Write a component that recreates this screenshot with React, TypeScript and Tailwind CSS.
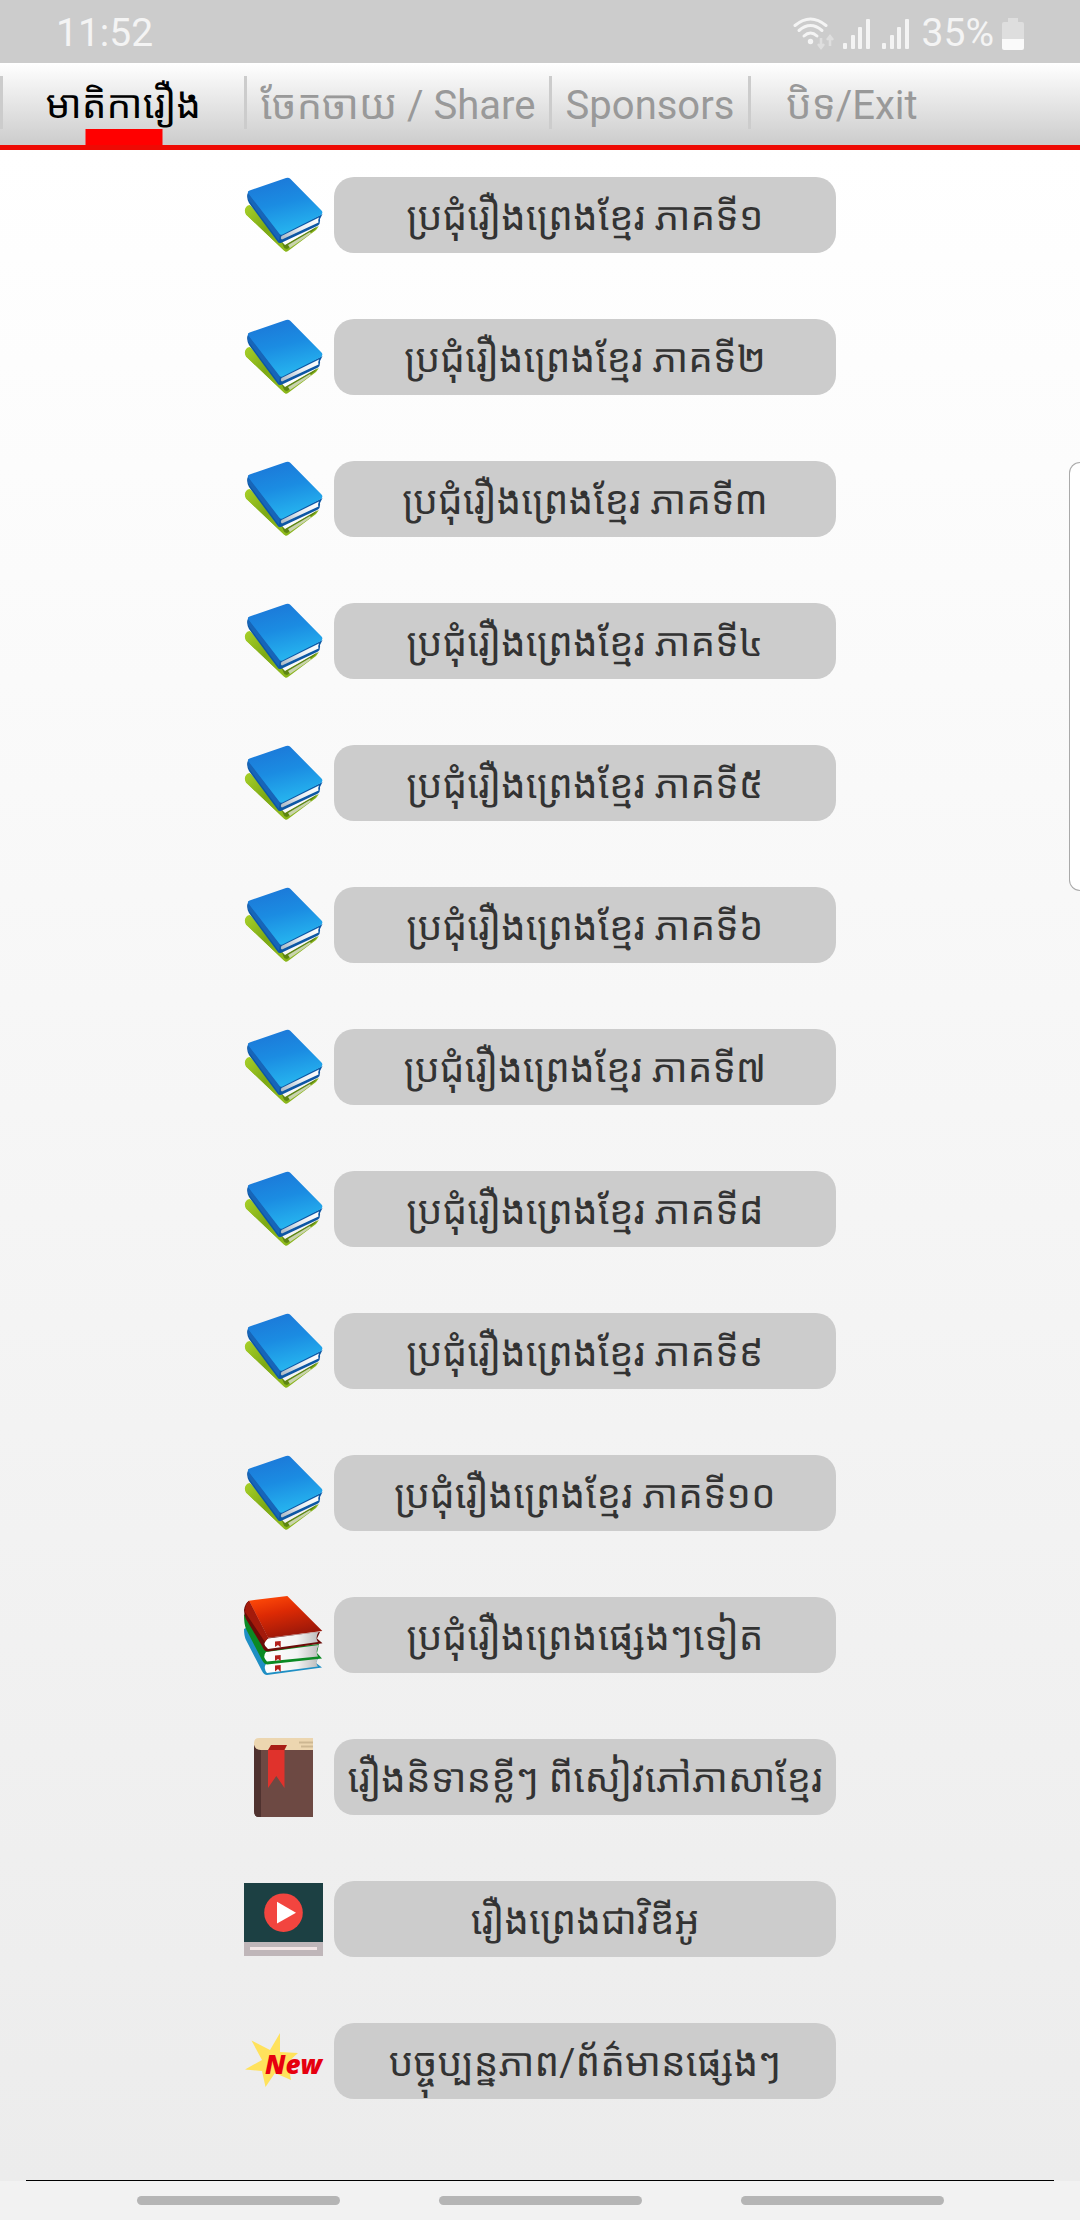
import type { ReactNode } from "react";

function BlueBooks() {
  return (
    <svg viewBox="0 0 80 78" className="h-[78px] w-20 overflow-visible" aria-hidden="true">
      <defs>
        <linearGradient id="blueCover" x1="0.3" y1="0" x2="0.6" y2="1">
          <stop offset="0" stopColor="#1c78d8" />
          <stop offset="0.45" stopColor="#1b8ce2" />
          <stop offset="1" stopColor="#27b8f0" />
        </linearGradient>
        <linearGradient id="greenSpine" x1="0" y1="0" x2="1" y2="1">
          <stop offset="0" stopColor="#a6cf28" />
          <stop offset="0.5" stopColor="#7da915" />
          <stop offset="1" stopColor="#93bd1f" />
        </linearGradient>
        <linearGradient id="pageEdge" x1="0" y1="1" x2="1" y2="0">
          <stop offset="0" stopColor="#a9b6c3" />
          <stop offset="0.5" stopColor="#e8edf2" />
          <stop offset="1" stopColor="#ffffff" />
        </linearGradient>
      </defs>
      <path d="M6 29L40 70L75 50L72 54L44 75Q42 76.500 40 74.500L2 38.500Q0 35 1.500 32Q3 29 6 29Z" fill="url(#greenSpine)" />
      <path d="M6 33L41 69L74 50L70 54L43 73L40 72L3 37Z" fill="#5d8512" />
      <path d="M44 69L66 56L67 57.500L46 72Z" fill="#c9d3ad" />
      <path d="M1.500 33Q3 29.500 7 30L38 67L42 76L40 74.500L2 38.500Z" fill="url(#greenSpine)" />
      <path d="M4.500 15L3.300 19Q2.800 23 5 27L33.500 65.500Q35 68 38 66.500L74 49.500Q76.500 48 76 43L78.500 38L40 56Z" fill="#0d57a4" />
      <path d="M37.500 60L75 41.500Q73.500 44.500 74.500 46.500L38 63.500Q36 62.500 37.500 60Z" fill="url(#pageEdge)" />
      <path d="M4 16Q4.500 14.700 7 14L42 2Q44.500 1 46.500 3L77.500 34.500Q79.500 37 77 39L38.500 58.500Q36 59.500 34.500 57.500L5 19Q3.500 17.500 4 16Z" fill="url(#blueCover)" />
      <path d="M4 17L36 58.500L35 65L4.500 24Q3 21 4 17Z" fill="#1765b8" />
    </svg>
  );
}

function StackedBooks() {
  return (
    <svg viewBox="0 0 80 78" className="h-[78px] w-20 overflow-visible" aria-hidden="true">
      <defs>
        <linearGradient id="redCover" x1="0.2" y1="0" x2="0.6" y2="1">
          <stop offset="0" stopColor="#ff4a08" />
          <stop offset="0.4" stopColor="#dd2a04" />
          <stop offset="1" stopColor="#96160a" />
        </linearGradient>
        <linearGradient id="redPages" x1="0" y1="0" x2="1" y2="0">
          <stop offset="0" stopColor="#ffffff" />
          <stop offset="0.6" stopColor="#f3f3f3" />
          <stop offset="1" stopColor="#bdbdbd" />
        </linearGradient>
      </defs>
      <path d="M0 33L2 32L22 66L75 60L72 67L78 71.500L23 79Q20 79 18 75L2 44Q0 40 0 33Z" fill="#1f8fc4" />
      <path d="M22 68Q19 72 23 77L74 70.500Q71 67 74 62Z" fill="url(#redPages)" />
      <path d="M0 19L3 16L22 54L75 48L73 57L78 62.500L23 68.500Q20 68 18 64L2 33Q0 28 0 19Z" fill="#0b8a24" />
      <path d="M22 56Q18 60.500 23 65.500L74 60.500Q71 55 75 49Z" fill="url(#redPages)" />
      <path d="M0 14Q1 7 5 4.700L24 41.700L76 36L73 42.500L78.500 47.300L24 55.500Q20 55.500 18 50L2 23Q0 19 0 14Z" fill="#6b0c08" />
      <path d="M24 42.500Q17 47.500 24 53L74 46Q71 42 74.500 36Z" fill="url(#redPages)" />
      <path d="M5 4.700L43.300 0L78.300 35L24 41.700Z" fill="url(#redCover)" />
      <path d="M5 4.700L24 41.700L21 46L1 16Q1 8 5 4.700Z" fill="#a31a0b" />
      <path d="M31 45.500L36.700 45V51.500L34 49L31 51Z M31 59.500L36.700 59V65L34 63L31 65Z M31 69.500L36.700 69V76L34 73L31 75.500Z" fill="#b3201c" />
    </svg>
  );
}

function BrownBook() {
  return (
    <svg viewBox="0 0 80 78" className="h-[78px] w-20 overflow-visible" aria-hidden="true">
      <path d="M15 0H69V13H10V5Q10 0 15 0Z" fill="#ecd6b0" />
      <path d="M10 7Q11 12 16 12H69V79H15Q10 79 10 73Z" fill="#6d4943" />
      <path d="M10 7Q11 12 17 12V79H15Q10 79 10 73Z" fill="#4f322f" />
      <path d="M55 3.500H69V5.500H55Z M57 7.500H69V9.500H57Z" fill="#cdb792" />
      <path d="M27 7H43L40.500 12H24Z" fill="#a81d16" />
      <path d="M24 12H40.500V50L32.300 38L24 50Z" fill="#e0322c" />
    </svg>
  );
}

function VideoBook() {
  return (
    <svg viewBox="0 0 80 78" className="h-[78px] w-20 overflow-visible" aria-hidden="true">
      <path d="M0 3H79V62H0Z" fill="#1c4043" />
      <path d="M0 62H79V76H0Z" fill="#bfb6b9" />
      <path d="M6 67H73V70H6Z" fill="#f3e6e6" />
      <circle cx="39.500" cy="32.700" r="19.300" fill="#f2453f" />
      <path d="M33 21.700L52 32.700L33 43.500Z" fill="#fff" />
    </svg>
  );
}

function NewBurst() {
  return (
    <svg viewBox="0 0 80 78" className="h-[78px] w-20 overflow-visible" role="img" aria-label="New">
      <path
        d="M36 11L36 30L54 31L44 40L47 58L31 51L21.500 65L18 49L1 47.500L18 38L7.500 18.500L26 28Z"
        fill="#ffe25c"
      />
      <text x="21" y="52" className="fill-[#e6000f] font-['Open_Sans',sans-serif] text-[26px] font-extrabold italic">
        New
      </text>
    </svg>
  );
}

function WifiIcon() {
  return (
    <svg viewBox="0 0 42 34" className="h-[34px] w-[42px]" fill="none" aria-hidden="true">
      <g stroke="#f4f4f4" strokeWidth="3" strokeLinecap="round">
        <path d="M2 8.500Q17.500 -4.500 33 8.500" />
        <path d="M6 13.500Q17.500 3.500 29 13.500" />
        <path d="M11 19Q17.500 13 24 19" />
      </g>
      <circle cx="17.500" cy="24.500" r="2.700" fill="#f4f4f4" />
      <path d="M28 21V30M25 27L28 31L31 27M37 29V20M34 23L37 19L40 23" stroke="#dedede" strokeWidth="2.500" />
    </svg>
  );
}

function SignalIcon() {
  return (
    <svg viewBox="0 0 28 30" className="h-[30px] w-7" fill="#f4f4f4" aria-hidden="true">
      <rect x="0" y="24" width="4" height="6" rx="1" />
      <rect x="8" y="16" width="4" height="14" rx="1" />
      <rect x="15" y="8" width="4" height="22" rx="1" />
      <rect x="23" y="0" width="4" height="30" rx="1" />
    </svg>
  );
}

function BatteryIcon() {
  return (
    <svg viewBox="0 0 22 32" className="h-8 w-[22px]" aria-hidden="true">
      <path d="M6 0H16V4H20Q22 4 22 6V21H0V6Q0 4 2 4H6Z" fill="#dedede" />
      <path d="M0 21H22V30Q22 32 20 32H2Q0 32 0 30Z" fill="#fafafa" />
    </svg>
  );
}

const tabs = [
  { label: "មាតិការឿង", size: "min-w-[244px] text-[39px]", active: true },
  { label: "ចែកចាយ / Share", size: "min-w-[305px] text-[40px]", active: false },
  { label: "Sponsors", size: "min-w-[199px] text-[40px]", active: false },
  { label: "បិទ/Exit", size: "min-w-[205px] text-[40px]", active: false },
];

const volumes = ["១", "២", "៣", "៤", "៥", "៦", "៧", "៨", "៩", "១០"];

const stories: { label: string; icon: ReactNode }[] = [
  ...volumes.map((n) => ({ label: `ប្រជុំរឿងព្រេងខ្មែរ ភាគទី${n}`, icon: <BlueBooks /> })),
  { label: "ប្រជុំរឿងព្រេងផ្សេងៗទៀត", icon: <StackedBooks /> },
  { label: "រឿងនិទានខ្លីៗ ពីសៀវភៅភាសាខ្មែរ", icon: <BrownBook /> },
  { label: "រឿងព្រេងជាវិឌីអូ", icon: <VideoBook /> },
  { label: "បច្ចុប្បន្នភាព/ព័ត៌មានផ្សេងៗ", icon: <NewBurst /> },
];

export default function App() {
  return (
    <div className="relative flex min-h-screen flex-col overflow-hidden bg-[#f2f2f2] font-[Roboto,'Noto_Sans_Khmer',sans-serif]">
      <header className="flex h-[63px] items-center justify-between bg-[#cccccc] pt-1 pr-14 pl-14 text-[39px] leading-none text-[#f4f4f4]">
        <time>11:52</time>
        <div className="flex items-center">
          <WifiIcon />
          <span className="ml-2 flex gap-[11px]">
            <SignalIcon />
            <SignalIcon />
          </span>
          <span className="mr-2 ml-3">35%</span>
          <BatteryIcon />
        </div>
      </header>

      <nav className="flex h-[87px] border-b-[5px] border-[#ee0a04] bg-linear-to-b from-white to-[#cccccc] pt-[13px]">
        {tabs.map((tab) => (
          <button
            key={tab.label}
            type="button"
            aria-current={tab.active ? "page" : undefined}
            className={`relative flex h-[53px] items-center justify-center border-l-[3px] border-[#cccccc] px-2 pt-[6px] leading-none whitespace-nowrap ${tab.size} ${tab.active ? "text-black" : "text-[#999999]"}`}
          >
            {tab.label}
            {tab.active && <span className="absolute top-full left-1/2 h-4 w-[77px] -translate-x-1/2 bg-[#ff0000]" />}
          </button>
        ))}
      </nav>

      <main className="flex flex-1 flex-col bg-linear-to-b from-white to-[#ececec] px-[26px] pt-[26px]">
        <ul className="flex flex-col items-center gap-16 pb-20">
          {stories.map((story) => (
            <li key={story.label} className="flex h-[78px] items-center gap-[10px]">
              {story.icon}
              <button
                type="button"
                className="h-[76px] w-[502px] rounded-[20px] bg-[#cccccc] pt-1 text-[39px] leading-none whitespace-nowrap text-[#333333]"
              >
                {story.label}
              </button>
            </li>
          ))}
        </ul>
        <hr className="mt-auto border-black" />
      </main>

      <footer className="flex h-[39px] items-center justify-center gap-[99px]">
        <button type="button" aria-label="Recent apps" className="h-[9px] w-[203px] rounded-full bg-[#b5b5b5]" />
        <button type="button" aria-label="Home" className="h-[9px] w-[203px] rounded-full bg-[#b5b5b5]" />
        <button type="button" aria-label="Back" className="h-[9px] w-[203px] rounded-full bg-[#b5b5b5]" />
      </footer>

      <aside
        aria-label="Edge panel"
        className="absolute top-[462px] right-0 h-[429px] w-[11px] rounded-l-[16px] border border-r-0 border-[#aaaaaa] bg-white"
      />
    </div>
  );
}
